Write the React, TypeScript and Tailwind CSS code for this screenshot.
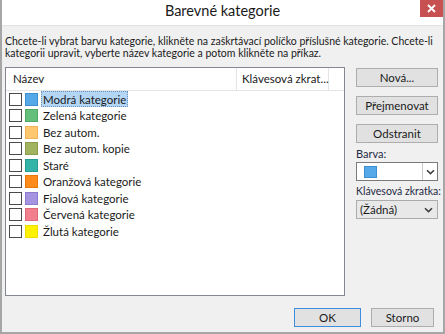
const font = { fontFamily: 'Lato, "Noto Sans", sans-serif' };

const categories = [
  { name: "Modrá kategorie", fill: "bg-[#56a9e9]", edge: "border-[#3d8fd0]", selected: true },
  { name: "Zelená kategorie", fill: "bg-[#64bf7a]", edge: "border-[#4fa864]" },
  { name: "Bez autom.", fill: "bg-[#ffc870]", edge: "border-[#f0b455]" },
  { name: "Bez autom. kopie", fill: "bg-[#a2b35f]", edge: "border-[#8c9c4c]" },
  { name: "Staré", fill: "bg-[#34b4a8]", edge: "border-[#269b90]" },
  { name: "Oranžová kategorie", fill: "bg-[#ff8c1a]", edge: "border-[#e87a0a]" },
  { name: "Fialová kategorie", fill: "bg-[#a594e0]", edge: "border-[#8e7bd0]" },
  { name: "Červená kategorie", fill: "bg-[#f27f8d]", edge: "border-[#de6a78]" },
  { name: "Žlutá kategorie", fill: "bg-[#fff200]", edge: "border-[#f0dc00]" },
];

function Chevron() {
  return (
    <svg width="9" height="6" viewBox="0 0 9 6">
      <path d="M1 1.2 L4.5 4.6 L8 1.2" fill="none" stroke="#404040" strokeWidth="1.6" />
    </svg>
  );
}

function Button({ label, primary }: { label: string; primary?: boolean }) {
  return (
    <div
      className={`h-[19px] flex items-center justify-center bg-[#e1e1e1] border text-[11.5px] text-[#1a1a1a] ${
        primary ? "border-[#3c8ee0]" : "border-[#adadad]"
      }`}
    >
      {label}
    </div>
  );
}

export default function App() {
  return (
    <div
      className="w-[445px] h-[334px] flex flex-col bg-[#f0f0f0] border-x-2 border-b-2 border-[#a6a6a6] overflow-hidden"
      style={font}
    >
      {/* titulek */}
      <div className="relative h-[26px] shrink-0 bg-white border-b border-[#e2e2e2] flex items-center justify-center">
        <span className="text-[14.5px] text-[#1a1a1a] leading-none pb-[2px]">Barevné kategorie</span>
        <div className="absolute right-0 top-0 w-[23px] h-[17px] bg-[#c75050] flex items-center justify-center">
          <svg width="9" height="9" viewBox="0 0 9 9">
            <path d="M1 1 L8 8 M8 1 L1 8" stroke="white" strokeWidth="1.8" />
          </svg>
        </div>
      </div>

      <p className="pl-[3px] pt-[9px] text-[10.5px] leading-[12px] text-[#1a1a1a] whitespace-nowrap">
        Chcete-li vybrat barvu kategorie, klikněte na zaškrtávací políčko příslušné kategorie. Chcete-li
        <br />
        kategorii upravit, vyberte název kategorie a potom klikněte na příkaz.
      </p>

      <div className="flex mt-[8px] ml-[3px] mr-[5px] gap-[11px]">
        {/* seznam */}
        <div className="w-[340px] h-[229px] bg-white border border-[#828790] flex flex-col">
          <div className="h-[23px] flex border-b border-[#e5e5e5] text-[11.5px] text-[#1a1a1a]">
            <div className="w-[231px] border-r border-[#e5e5e5] pl-[7px] flex items-center">Název</div>
            <div className="w-[92px] border-r border-[#e5e5e5] pl-[5px] flex items-center whitespace-nowrap">
              Klávesová zkrat...
            </div>
          </div>
          {categories.map((c) => (
            <div key={c.name} className="h-[16.5px] flex items-center text-[11.5px] text-[#1a1a1a]">
              <div className="ml-[3px] w-[13px] h-[13px] border border-[#4a4a4a] bg-white" />
              <div className={`ml-[3px] w-[13px] h-[13px] border ${c.fill} ${c.edge}`} />
              <div
                className={`ml-[3px] h-[16px] flex items-center px-[2px] whitespace-nowrap ${
                  c.selected ? "bg-[#b3d6f5] outline outline-1 outline-dotted outline-[#6a8fb8] -outline-offset-1" : ""
                }`}
              >
                {c.name}
              </div>
            </div>
          ))}
        </div>

        {/* tlačítka */}
        <div className="w-[82px] flex flex-col pt-[1px]">
          <Button label="Nová..." />
          <div className="mt-[9px]">
            <Button label="Přejmenovat" />
          </div>
          <div className="mt-[9px]">
            <Button label="Odstranit" />
          </div>
          <div className="mt-[3px] text-[11px] leading-[16px] text-[#1f2a44]">Barva:</div>
          <div className="h-[19px] flex bg-white border border-[#7a7a7a]">
            <div className="flex-1 flex items-center pl-[7px]">
              <div className="w-[13px] h-[12px] bg-[#56a9e9] border border-[#3d8fd0]" />
            </div>
            <div className="w-[15px] border-l border-[#c8c8c8] flex items-center justify-center">
              <Chevron />
            </div>
          </div>
          <div className="mt-[2px] text-[10.5px] leading-[17px] text-[#1f2a44] whitespace-nowrap">Klávesová zkratka:</div>
          <div className="h-[19px] flex items-center justify-between bg-[#e8e8e8] border border-[#acacac] pl-[3px] pr-[4px] text-[11.5px] text-[#1a1a1a]">
            <span>(Žádná)</span>
            <Chevron />
          </div>
        </div>
      </div>

      <div className="flex justify-end gap-[10px] mt-[12px] mr-[9px]">
        <div className="w-[67px]">
          <Button label="OK" primary />
        </div>
        <div className="w-[63px]">
          <Button label="Storno" />
        </div>
      </div>
    </div>
  );
}
